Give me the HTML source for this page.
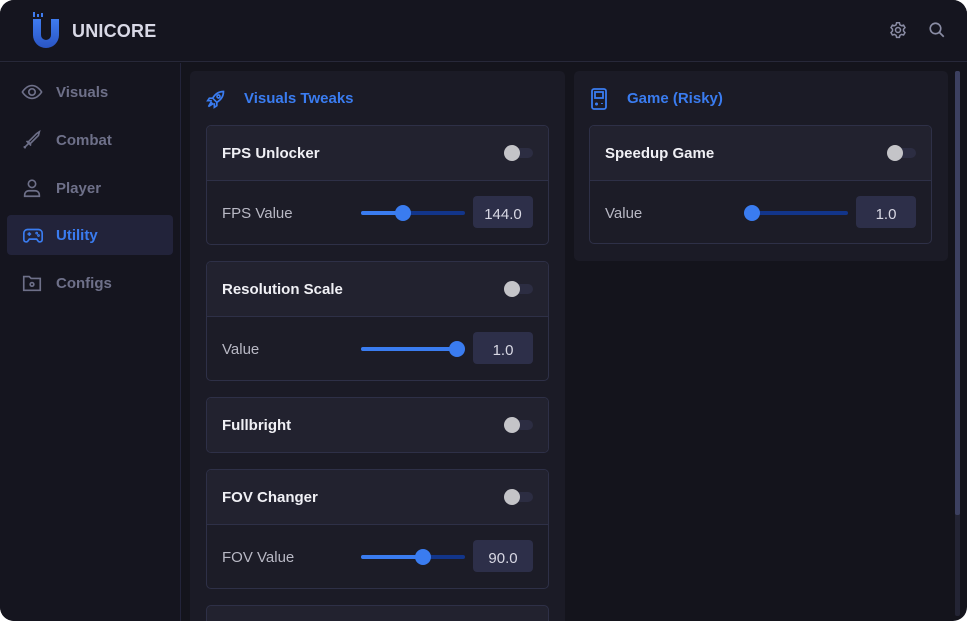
<!DOCTYPE html>
<html><head><meta charset="utf-8"><style>
*{box-sizing:border-box;margin:0;padding:0}
html,body{width:967px;height:621px;overflow:hidden}
body{background:#fff;font-family:"Liberation Sans",sans-serif;position:relative}
.win{position:absolute;left:0;top:0;width:967px;height:621px;background:#14141c;border-radius:14px;overflow:hidden}
.hdr{position:absolute;left:0;top:0;width:967px;height:62px;background:#15151f;border-bottom:1px solid #272839}
.logo{position:absolute;left:72px;top:21px;font-size:18px;font-weight:bold;color:#d9d9e6;letter-spacing:0.2px}
.side{position:absolute;left:0;top:63px;width:181px;height:558px;background:#15151f;border-right:1px solid #23243a}
.nav{position:absolute;left:7px;width:166px;height:40px;border-radius:4px;display:flex;align-items:center;color:#6e7089;font-weight:bold;font-size:15px}
.nav svg{position:absolute;left:14px}
.nav span{position:absolute;left:49px}
.nav.act{background:#22233a;color:#3a7cf0}
.panel{position:absolute;background:#1b1b26;border-radius:5px}
.ptitle{position:absolute;color:#3a7cf0;font-weight:bold;font-size:15px}
.card{position:absolute;border:1px solid #2e3047;border-radius:5px;overflow:hidden;background:#1c1c27}
.ch{height:55px;background:#22222f;border-bottom:1px solid #2e3047;position:relative}
.ch.only{border-bottom:none}
.ch b{position:absolute;left:15px;top:19px;color:#f0f0f5;font-size:15px}
.tg{position:absolute;right:15px;top:22px;width:28px;height:10px;border-radius:5px;background:#2c2d42}
.tg:before{content:"";position:absolute;left:-1px;top:-3px;width:16px;height:16px;border-radius:50%;background:#c4c4c8}
.cb{height:63px;position:relative}
.cb .l{position:absolute;left:15px;top:24px;color:#b8b8c4;font-size:15px}
.tr{position:absolute;left:154px;top:30px;width:104px;height:4px;border-radius:2px;background:#12358a}
.fill{position:absolute;left:0;top:0;height:4px;border-radius:2px;background:#3a7cf0}
.th{position:absolute;top:-6px;width:16px;height:16px;border-radius:50%;background:#3a7cf0;margin-left:-8px}
.box{position:absolute;left:266px;top:15px;width:60px;height:32px;border-radius:4px;background:#2d2f49;color:#d8d8e4;font-size:15px;text-align:center;line-height:32px;padding-top:3px}
</style></head><body><div class="win">
<div class="hdr">
<svg style="position:absolute;left:32px;top:12px" width="28" height="36" viewBox="0 0 28 36"><defs><linearGradient id="g" x1="0" y1="0" x2="0" y2="1"><stop offset="0" stop-color="#3f7cf0"/><stop offset="1" stop-color="#2a55c4"/></linearGradient></defs><path d="M1 7h8v16a5 5 0 0 0 10 0V7h8v16a13 13 0 0 1-26 0z" fill="url(#g)"/><rect x="1" y="0" width="2" height="5" fill="#3f7cf0"/><rect x="5" y="2" width="2" height="3" fill="#3f7cf0"/><rect x="9" y="1" width="2" height="4" fill="#3f7cf0"/></svg>
<div class="logo">UNICORE</div>
<svg style="position:absolute;left:888px;top:20px" width="20" height="20" viewBox="0 0 24 24" fill="none" stroke="#8a8ca4" stroke-width="1.8"><circle cx="12" cy="12" r="3"/><path d="M10.3 3.3h3.4l.6 2.5 1.9 1.1 2.5-.7 1.7 2.9-1.8 1.9v2.2l1.8 1.9-1.7 2.9-2.5-.7-1.9 1.1-.6 2.5h-3.4l-.6-2.5-1.9-1.1-2.5.7-1.7-2.9 1.8-1.9v-2.2L3.6 9.1l1.7-2.9 2.5.7 1.9-1.1z"/></svg>
<svg style="position:absolute;left:928px;top:21px" width="18" height="18" viewBox="0 0 24 24" fill="none" stroke="#8a8ca4" stroke-width="2.2"><circle cx="10" cy="10" r="7"/><path d="M15 15l6 6"/></svg>
</div>
<div class="side">
<div class="nav" style="top:9px"><svg width="22" height="22" viewBox="0 0 24 24" fill="none" stroke="#6e7089" stroke-width="1.8"><path d="M1.5 12S5.5 5 12 5s10.5 7 10.5 7-4 7-10.5 7S1.5 12 1.5 12z"/><circle cx="12" cy="12" r="3.5"/></svg><span>Visuals</span></div>
<div class="nav" style="top:57px"><svg width="22" height="22" viewBox="0 0 24 24" fill="none" stroke="#6e7089" stroke-width="1.8"><path d="M20 3l-1 4-9 9-2-2 9-9z M6 13l5 5 M8 16l-4 4 M3 19l2 2"/></svg><span>Combat</span></div>
<div class="nav" style="top:105px"><svg width="22" height="22" viewBox="0 0 24 24" fill="none" stroke="#6e7089" stroke-width="1.8"><circle cx="12" cy="7.5" r="4"/><path d="M4 21v-1.5A4.5 4.5 0 0 1 8.5 15h7a4.5 4.5 0 0 1 4.5 4.5V21z"/></svg><span>Player</span></div>
<div class="nav act" style="top:152px"><svg width="24" height="22" viewBox="0 0 24 24" fill="none" stroke="#3a7cf0" stroke-width="1.8"><path d="M6 6h12a4 4 0 0 1 4 4v7a2.5 2.5 0 0 1-4.5 1.5L16 16.5H8l-1.5 2A2.5 2.5 0 0 1 2 17v-7a4 4 0 0 1 4-4z"/><path d="M6 11h4M8 9v4"/><circle cx="16" cy="10" r=".6"/><circle cx="18" cy="12.5" r=".6"/></svg><span>Utility</span></div>
<div class="nav" style="top:200px"><svg width="22" height="22" viewBox="0 0 24 24" fill="none" stroke="#6e7089" stroke-width="1.8"><path d="M3 5h6l2 2h10v13H3z"/><circle cx="12" cy="13.5" r="2"/></svg><span>Configs</span></div>
</div>

<div class="panel" style="left:190px;top:71px;width:375px;height:550px;border-radius:5px 5px 0 0">
<svg style="position:absolute;left:16px;top:18px" width="20" height="20" viewBox="0 0 24 24" fill="none" stroke="#3a7cf0" stroke-width="2"><path d="M21 3c-6 0-10 3-13 8l5 5c5-3 8-7 8-13z"/><circle cx="15" cy="9" r="1.8"/><path d="M8 11H4l-2 3h5M13 16v4l-3 2v-5M6 16l-3 5 5-3z"/></svg>
<div class="ptitle" style="left:54px;top:19px">Visuals Tweaks</div>
</div>
<div class="panel" style="left:574px;top:71px;width:374px;height:190px">
<svg style="position:absolute;left:17px;top:17px" width="16" height="22" viewBox="0 0 16 22" fill="none" stroke="#3a7cf0" stroke-width="1.8"><rect x="1" y="1" width="14" height="20" rx="2"/><rect x="4" y="4" width="8" height="6"/><path d="M4 16h3M5.5 14.5v3M11 15v1"/></svg>
<div class="ptitle" style="left:53px;top:19px">Game (Risky)</div>
</div>
<div style="position:absolute;left:955px;top:71px;width:5px;height:545px;background:#232434;border-radius:2px"></div>
<div style="position:absolute;left:955px;top:71px;width:5px;height:444px;background:#3c4060;border-radius:2px"></div>

<div class="card" style="left:206px;top:125px;width:343px;height:120px"><div class="ch"><b>FPS Unlocker</b><div class="tg"></div></div><div class="cb"><div class="l">FPS Value</div><div class="tr"><div class="fill" style="width:42px"></div><div class="th" style="left:42px"></div></div><div class="box">144.0</div></div></div>
<div class="card" style="left:206px;top:261px;width:343px;height:120px"><div class="ch"><b>Resolution Scale</b><div class="tg"></div></div><div class="cb"><div class="l">Value</div><div class="tr"><div class="fill" style="width:96px"></div><div class="th" style="left:96px"></div></div><div class="box">1.0</div></div></div>
<div class="card" style="left:206px;top:397px;width:343px;height:56px"><div class="ch only"><b>Fullbright</b><div class="tg"></div></div></div>
<div class="card" style="left:206px;top:469px;width:343px;height:120px"><div class="ch"><b>FOV Changer</b><div class="tg"></div></div><div class="cb"><div class="l">FOV Value</div><div class="tr"><div class="fill" style="width:62px"></div><div class="th" style="left:62px"></div></div><div class="box">90.0</div></div></div>
<div class="card" style="left:206px;top:605px;width:343px;height:16px;border-bottom:none;border-radius:5px 5px 0 0;background:#22222f"></div>
<div class="card" style="left:589px;top:125px;width:343px;height:119px"><div class="ch"><b>Speedup Game</b><div class="tg"></div></div><div class="cb"><div class="l">Value</div><div class="tr"><div class="fill" style="width:0"></div><div class="th" style="left:8px"></div></div><div class="box">1.0</div></div></div>
</div></body></html>
